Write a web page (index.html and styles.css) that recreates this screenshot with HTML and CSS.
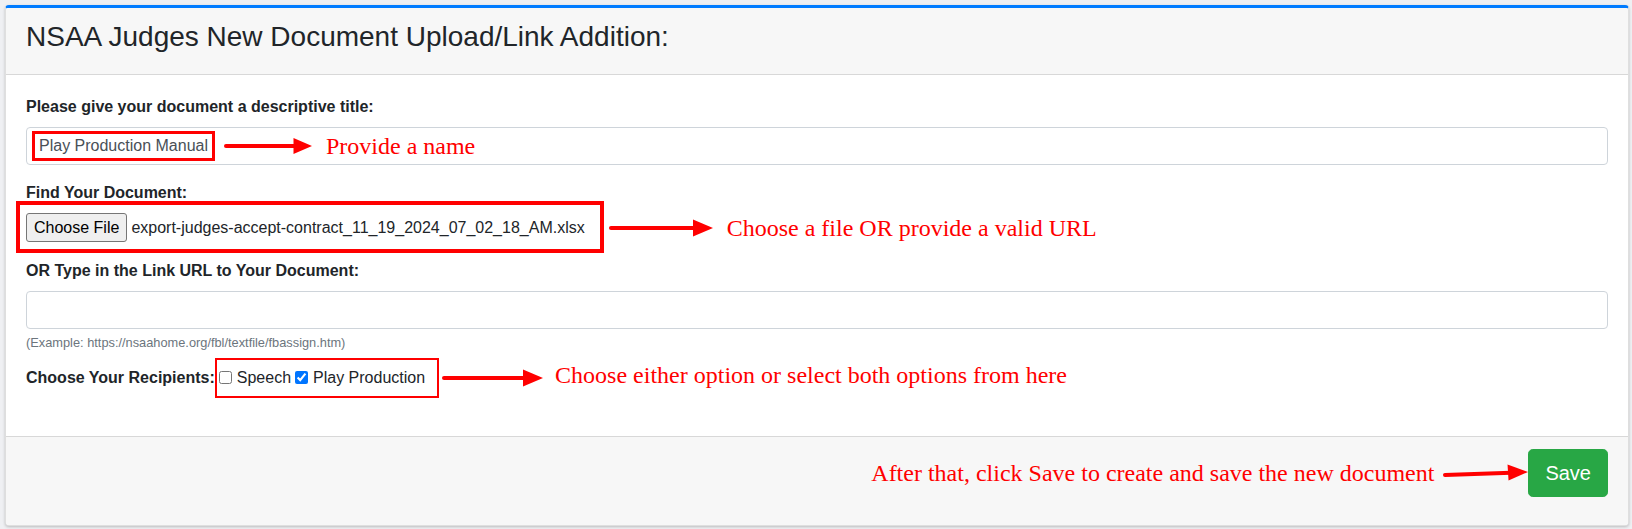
FILE: index.html
```html
<!DOCTYPE html>
<html lang="en">
<head>
<meta charset="utf-8">
<title>NSAA Judges New Document Upload/Link Addition</title>
<link rel="stylesheet" href="styles.css">
</head>
<body>
<div class="page">
  <div class="card">
    <div class="card-header">
      <h3 class="card-title">NSAA Judges New Document Upload/Link Addition:</h3>
    </div>
    <div class="card-body">
      <div class="form-group">
        <label class="field-label">Please give your document a descriptive title:</label>
        <div class="form-control annotated-input">
          <span class="mark mark-thick">Play Production Manual</span>
          <svg class="arrow arrow-1" width="88" height="16" viewBox="0 0 88 16">
            <line x1="2" y1="8" x2="72" y2="8" stroke="#ff0000" stroke-width="4" stroke-linecap="round"/>
            <polygon points="69.5,0 88,8 69.5,16" fill="#ff0000"/>
          </svg>
          <span class="note">Provide a name</span>
        </div>
      </div>

      <div class="form-group">
        <label class="field-label">Find Your Document:</label>
        <div class="annot-row">
          <div class="file-box">
            <span class="file-btn">Choose File</span>
            <span class="file-name">export-judges-accept-contract_11_19_2024_07_02_18_AM.xlsx</span>
          </div>
          <svg class="arrow arrow-2" width="104" height="18" viewBox="0 0 104 18">
            <line x1="2" y1="9" x2="88" y2="9" stroke="#ff0000" stroke-width="4" stroke-linecap="round"/>
            <polygon points="84,0.5 104,9 84,17.5" fill="#ff0000"/>
          </svg>
          <span class="note">Choose a file OR provide a valid URL</span>
        </div>
      </div>

      <div class="form-group">
        <label class="field-label">OR Type in the Link URL to Your Document:</label>
        <div class="form-control"></div>
        <small class="help-text">(Example: https://nsaahome.org/fbl/textfile/fbassign.htm)</small>
      </div>

      <div class="form-group last-group">
        <div class="annot-row">
          <label class="field-label inline-label">Choose Your Recipients:</label>
          <span class="check-box">
            <label class="check"><input type="checkbox"> Speech</label>
            <label class="check"><input type="checkbox" checked> Play Production</label>
          </span>
          <svg class="arrow arrow-3" width="101" height="18" viewBox="0 0 101 18">
            <line x1="2" y1="9" x2="84" y2="9" stroke="#ff0000" stroke-width="4" stroke-linecap="round"/>
            <polygon points="81,0.5 101,9 81,17.5" fill="#ff0000"/>
          </svg>
          <span class="note note-3">Choose either option or select both options from here</span>
        </div>
      </div>
    </div>
    <div class="card-footer">
      <div class="footer-row">
        <span class="note">After that, click Save to create and save the new document</span>
        <svg class="arrow arrow-4" width="85" height="17" viewBox="0 0 85 17">
          <line x1="2" y1="11" x2="68" y2="8.8" stroke="#ff0000" stroke-width="4" stroke-linecap="round"/>
          <polygon points="64.5,0.5 85,8 65.5,16.5" fill="#ff0000"/>
        </svg>
        <button class="btn-save" type="button">Save</button>
      </div>
    </div>
  </div>
</div>
</body>
</html>
```
FILE: styles.css
```css
* { box-sizing: border-box; }

html, body {
  margin: 0;
  padding: 0;
  background: #eff0f3;
}

body {
  font-family: "Liberation Sans", Arial, sans-serif;
  font-size: 16px;
  line-height: 1.5;
  color: #212529;
}

.page {
  padding: 5px 3px 3px 5px;
}

.card {
  background: #fff;
  border: 1px solid rgba(0, 0, 0, 0.125);
  border-top: 3px solid #007bff;
  border-radius: 4px;
  box-shadow: 0 1px 3px rgba(0, 0, 0, 0.22);
  overflow: hidden;
}

.card-header {
  background: #f7f7f7;
  border-bottom: 1px solid rgba(0, 0, 0, 0.125);
  padding: 12px 20px;
}

.card-title {
  margin: 0 0 8px;
  font-size: 28px;
  font-weight: 500;
  line-height: 1.2;
  color: #212529;
}

.card-body {
  padding: 20px 20px 20px;
}

.form-group {
  margin-bottom: 16px;
}

.form-group.last-group {
  margin-top: -2px;
  margin-bottom: 26px;
}

.field-label {
  display: block;
  font-weight: 700;
  margin-bottom: 8px;
  line-height: 24px;
}

.field-label.inline-label {
  display: inline-block;
  margin: 0;
}

.form-control {
  display: block;
  width: 100%;
  height: 38px;
  border: 1px solid #ced4da;
  border-radius: 4px;
  background: #fff;
  padding: 6px 12px;
  color: #495057;
}

.annotated-input {
  display: flex;
  align-items: center;
  padding: 0 12px 0 5px;
}

.mark-thick {
  border: 3px solid #ff0000;
  padding: 3px 4px;
  line-height: 18px;
  color: #495057;
  white-space: nowrap;
}

.arrow {
  flex: none;
  display: block;
}

.arrow-1 { margin: 0 14px 0 9px; }
.arrow-2 { margin: 0 14px 0 5px; }
.arrow-3 { margin: 0 12px 0 3px; }
.arrow-4 { margin: 0 0 0 9px; }

.note {
  font-family: "Liberation Serif", "Times New Roman", serif;
  font-size: 24px;
  line-height: 24px;
  color: #ff0000;
  white-space: nowrap;
}

.note-3 {
  margin-top: -6px;
}

.annot-row {
  display: flex;
  align-items: center;
}

.file-box {
  display: flex;
  align-items: center;
  height: 52px;
  margin: -12px 0 -10px -10px;
  padding: 8px 15px 6px 6px;
  border: 4px solid #ff0000;
}

.file-btn {
  display: inline-flex;
  align-items: center;
  height: 29px;
  padding: 0 7px;
  margin-right: 4px;
  background: #efefef;
  border: 1px solid #767676;
  border-radius: 3px;
  color: #000;
  font-size: 16px;
  white-space: nowrap;
}

.file-name {
  white-space: nowrap;
  color: #212529;
}

.help-text {
  display: block;
  margin-top: 4px;
  font-size: 12.8px;
  line-height: 1.5;
  color: #6c757d;
}

.check-box {
  display: inline-flex;
  align-items: center;
  height: 40px;
  margin: -8px 0;
  padding: 0 12px 0 0;
  border: 2px solid #ff0000;
}

.check {
  display: inline-flex;
  align-items: center;
  line-height: 24px;
  white-space: nowrap;
}

.check + .check {
  margin-left: 2px;
}

.check input {
  width: 13px;
  height: 13px;
  margin: 0 5px 0 2px;
}

.card-footer {
  background: #f7f7f7;
  border-top: 1px solid rgba(0, 0, 0, 0.125);
  padding: 12px 20px 28px;
}

.footer-row {
  display: flex;
  justify-content: flex-end;
  align-items: center;
}

.btn-save {
  font-family: "Liberation Sans", Arial, sans-serif;
  font-size: 20px;
  line-height: 1.5;
  padding: 8px 16px;
  color: #fff;
  background: #28a745;
  border: 1px solid #28a745;
  border-radius: 4.8px;
}
```
